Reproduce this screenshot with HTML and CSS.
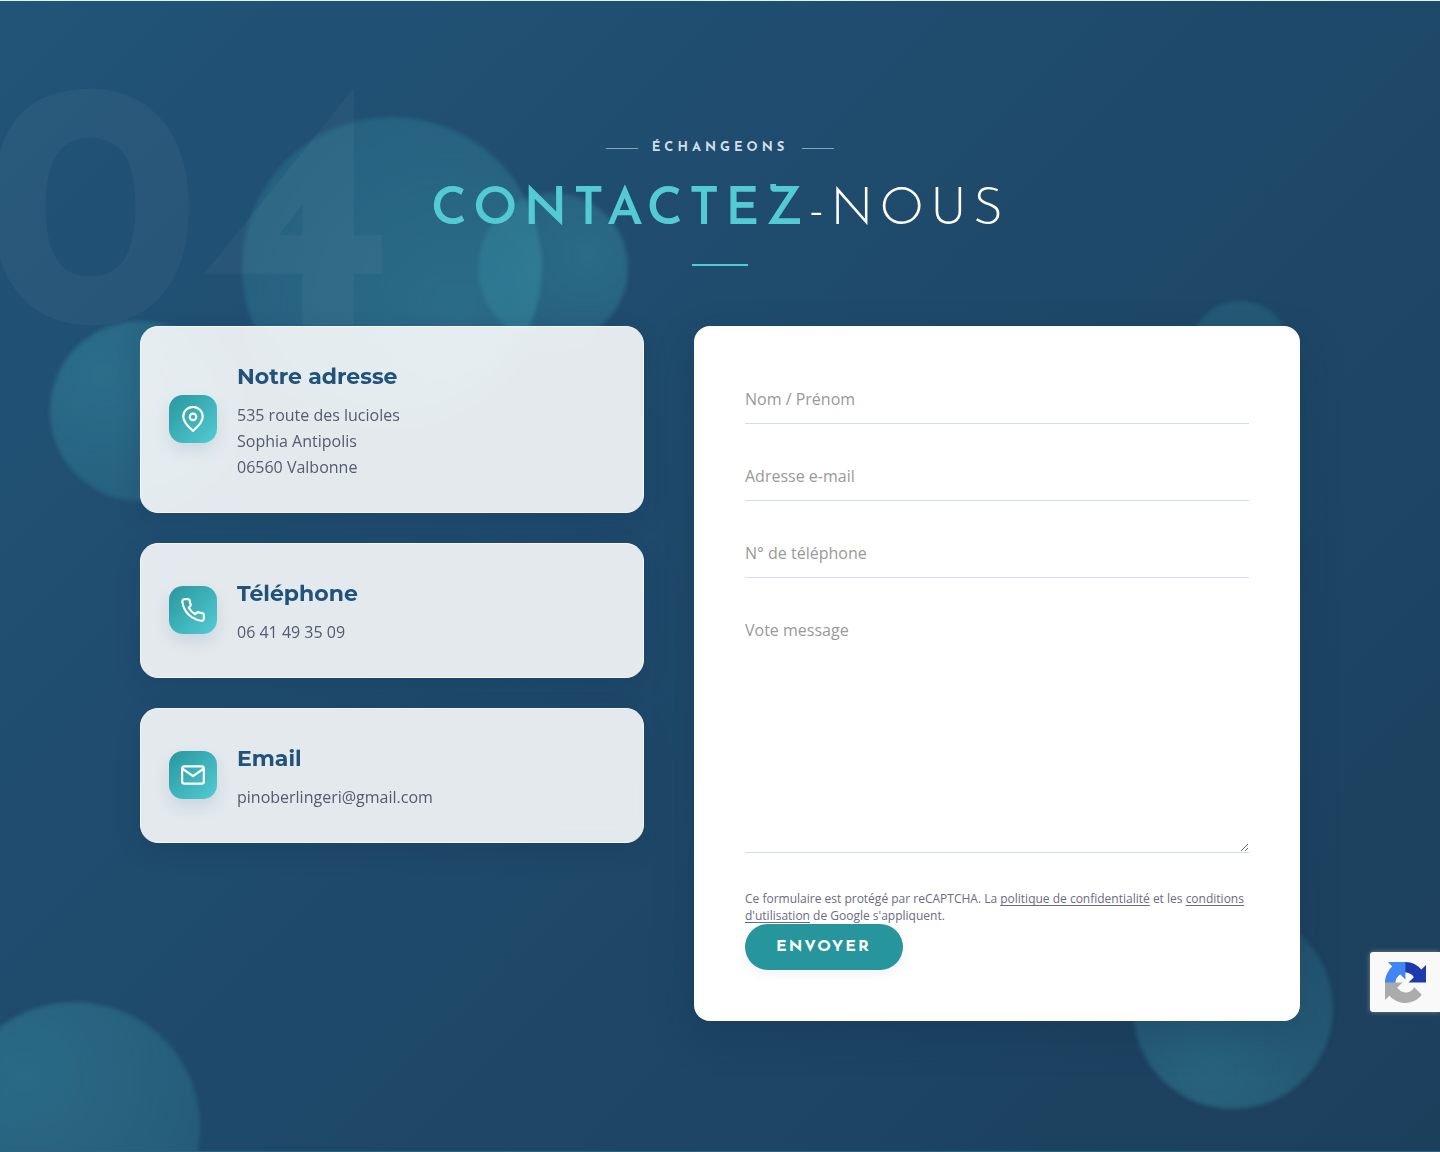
FILE: index.html
```html
<!DOCTYPE html>
<html lang="fr">
<head>
  <meta charset="UTF-8">
  <meta name="viewport" content="width=device-width, initial-scale=1.0">
  <title>Contactez-nous</title>
  <link rel="stylesheet" href="styles.css">
</head>
<body>
  <section class="contact" id="contact">
    <!-- décor -->
    <div class="bubbles" aria-hidden="true">
      <span class="bubble bubble-1"></span>
      <span class="bubble bubble-2"></span>
      <span class="bubble bubble-3"></span>
      <span class="bubble bubble-4"></span>
      <span class="bubble bubble-5"></span>
      <span class="bubble bubble-6"></span>
    </div>
    <div class="section-number" aria-hidden="true">04</div>

    <div class="container">
      <header class="section-header">
        <p class="eyebrow">Échangeons</p>
        <h2 class="section-title"><strong>Contactez</strong>-nous</h2>
      </header>

      <div class="contact-grid">
        <div class="info-list">
          <article class="info-card">
            <div class="info-icon">
              <svg viewBox="0 0 24 24"><path d="M12 23c-4.700-4-9-8.300-9-13.200a9 9 0 0 1 18 0c0 4.900-4.300 9.200-9 13.200z"/><circle cx="12" cy="10" r="3"/></svg>
            </div>
            <div>
              <h3>Notre adresse</h3>
              <p>535 route des lucioles<br>Sophia Antipolis<br>06560 Valbonne</p>
            </div>
          </article>

          <article class="info-card">
            <div class="info-icon">
              <svg viewBox="0 0 24 24"><path d="M22 16.920v3a2 2 0 0 1-2.180 2 19.790 19.790 0 0 1-8.630-3.070 19.500 19.500 0 0 1-6-6 19.790 19.790 0 0 1-3.070-8.670A2 2 0 0 1 4.110 2h3a2 2 0 0 1 2 1.720 12.840 12.840 0 0 0 .7 2.810 2 2 0 0 1-.45 2.110L8.090 9.910a16 16 0 0 0 6 6l1.270-1.270a2 2 0 0 1 2.110-.45 12.840 12.840 0 0 0 2.810.7A2 2 0 0 1 22 16.920z"/></svg>
            </div>
            <div>
              <h3>Téléphone</h3>
              <p>06 41 49 35 09</p>
            </div>
          </article>

          <article class="info-card">
            <div class="info-icon">
              <svg viewBox="0 0 24 24"><rect x="2" y="4" width="20" height="16" rx="2"/><path d="M2 6l10 7 10-7"/></svg>
            </div>
            <div>
              <h3>Email</h3>
              <p>pinoberlingeri@gmail.com</p>
            </div>
          </article>
        </div>

        <form class="contact-form">
          <input type="text" name="name" aria-label="Nom / Prénom" placeholder="Nom / Prénom" required>
          <input type="email" name="email" aria-label="Adresse e-mail" placeholder="Adresse e-mail" required>
          <input type="tel" name="phone" aria-label="N° de téléphone" placeholder="N° de téléphone">
          <textarea name="message" aria-label="Vote message" placeholder="Vote message" required></textarea>

          <p class="legal">Ce formulaire est protégé par reCAPTCHA. La <a href="#">politique de confidentialité</a> et les <a href="#">conditions d'utilisation</a> de Google s'appliquent.</p>
          <button type="submit">Envoyer</button>
        </form>
      </div>
    </div>
  </section>

  <div class="recaptcha-badge">
    <svg viewBox="0 0 64 64">
      <path fill="#1c3aa9" d="M64 31.955l-.033-1.370V4.687l-7.160 7.160C50.948 4.674 42.033.093 32.050.093c-10.400 0-19.622 4.960-25.458 12.640l11.736 11.860a15.550 15.550 0 0 1 4.754-5.334c2.050-1.600 4.952-2.906 8.968-2.906.485 0 .86.057 1.135.163 4.976.393 9.288 3.140 11.828 7.124l-8.307 8.307L64 31.953"/>
      <path fill="#4285f4" d="M31.862.094l-1.370.033H4.594l7.160 7.160C4.580 13.147 0 22.060 0 32.046c0 10.400 4.960 19.622 12.640 25.458L24.500 45.768a15.560 15.560 0 0 1-5.334-4.754c-1.600-2.050-2.906-4.952-2.906-8.968 0-.485.057-.86.163-1.135.393-4.976 3.140-9.288 7.124-11.828l8.307 8.307L31.860.095"/>
      <path fill="#ababab" d="M.001 32.045l.033 1.370v25.898l7.160-7.160c5.860 7.173 14.774 11.754 24.760 11.754 10.400 0 19.622-4.960 25.458-12.640l-11.736-11.860a15.550 15.550 0 0 1-4.754 5.334c-2.050 1.600-4.952 2.906-8.968 2.906-.485 0-.86-.057-1.135-.163-4.976-.393-9.288-3.140-11.828-7.124l8.307-8.307c-10.522.04-22.400.066-27.295-.005"/>
    </svg>
  </div>
</body>
</html>
```

FILE: styles.css
```css
* {
  box-sizing: border-box;
}
body {
  margin: 0;
  font-family: "Open Sans", "Noto Sans", sans-serif;
  font-size: 16px;
  line-height: 26px;
  color: #555b6e;
}
h2, h3, p {
  margin: 0;
}

/* Section */
.contact {
  position: relative;
  overflow: hidden;
  min-height: 100vh;
  padding: 136px 20px 130px;
  border-top: 1px solid #dcf7f7;
  border-bottom: 1px solid #2a6482;
  background: linear-gradient(135deg, #215477 0%, #1f4b6d 40%, #1c3f5c 100%);
}
.container {
  position: relative;
  max-width: 1160px;
  margin: 0 auto;
}
.section-number {
  position: absolute;
  top: 60px;
  left: -20px;
  font-family: "Josefin Sans", Lato, sans-serif;
  font-size: 352px;
  line-height: 352px;
  font-weight: 700;
  color: rgba(255, 255, 255, 0.04);
}

/* Bulles */
.bubble {
  position: absolute;
  border-radius: 50%;
  background: radial-gradient(circle at 30% 30%, rgba(77, 201, 210, 0.25), rgba(77, 201, 210, 0.15) 75%);
  filter: blur(2px);
}
.bubble-1 {
  top: 116px;
  left: 242px;
  width: 300px;
  height: 300px;
  background-image: radial-gradient(circle at 72% 65%, rgba(77, 201, 210, 0.25), rgba(77, 201, 210, 0.15) 75%);
}
.bubble-2 {
  top: 192px;
  left: 478px;
  width: 150px;
  height: 150px;
  background-image: radial-gradient(circle at 73% 42%, rgba(77, 201, 210, 0.25), rgba(77, 201, 210, 0.15) 75%);
}
.bubble-3 {
  top: 320px;
  left: 50px;
  width: 180px;
  height: 180px;
}
.bubble-4 {
  bottom: -101px;
  left: -50px;
  width: 250px;
  height: 250px;
}
.bubble-5 {
  right: 107px;
  bottom: 42px;
  width: 200px;
  height: 200px;
  background-image: radial-gradient(circle at 40% 80%, rgba(77, 201, 210, 0.25), rgba(77, 201, 210, 0.15) 75%);
}
.bubble-6 {
  top: 300px;
  right: 150px;
  width: 100px;
  height: 100px;
  background: rgba(77, 201, 210, 0.14);
}

/* Titre */
.section-header {
  text-align: center;
}
.eyebrow {
  display: flex;
  justify-content: center;
  align-items: center;
  gap: 14px;
  font-family: "Josefin Sans", Lato, sans-serif;
  font-size: 13px;
  line-height: 22px;
  font-weight: 700;
  letter-spacing: 4px;
  text-transform: uppercase;
  color: #d0dfe9;
}
.eyebrow::before,
.eyebrow::after {
  content: "";
  width: 32px;
  height: 1px;
  background: #84a4b6;
}
.section-title {
  margin-top: 20px;
  font-family: "Josefin Sans", Lato, sans-serif;
  font-size: 52px;
  line-height: 64px;
  font-weight: 300;
  letter-spacing: 6px;
  text-transform: uppercase;
  color: #fff;
}
.section-title strong {
  font-weight: 600;
  color: #54cbd4;
}
.section-title::after {
  content: "";
  display: block;
  width: 56px;
  height: 2px;
  margin: 21px auto 0;
  background: #54cbd4;
}

/* Cartes */
.contact-grid {
  display: grid;
  grid-template-columns: 504fr 606fr;
  align-items: start;
  gap: 50px;
  margin-top: 60px;
}
.info-list {
  display: grid;
  gap: 30px;
}
.info-card {
  display: flex;
  align-items: center;
  gap: 20px;
  padding: 30px 28px 32px;
  border: 1px solid #f4f7f9;
  border-radius: 18px;
  background: rgba(255, 255, 255, 0.88);
  backdrop-filter: blur(10px);
  box-shadow: 0 8px 24px rgba(20, 40, 70, 0.16);
}
.info-card h3 {
  margin-bottom: 6px;
  font-family: Montserrat, "Open Sans", sans-serif;
  font-size: 22px;
  line-height: 39px;
  font-weight: 700;
  color: #21527a;
}
.info-icon {
  display: flex;
  justify-content: center;
  align-items: center;
  flex: none;
  width: 48px;
  height: 48px;
  border-radius: 14px;
  background: linear-gradient(135deg, #27979e, #54cbd4);
  box-shadow: 0 8px 16px rgba(33, 82, 122, 0.12);
}
.info-icon svg {
  width: 26px;
  height: 26px;
  fill: none;
  stroke: #fff;
  stroke-width: 2;
  stroke-linecap: round;
  stroke-linejoin: round;
}

/* Formulaire */
.contact-form {
  display: flex;
  flex-direction: column;
  align-items: flex-start;
  gap: 30px;
  padding: 51px;
  border-radius: 16px;
  background: #fff;
  box-shadow: 0 15px 40px rgba(20, 40, 70, 0.22);
}
.contact-form input,
.contact-form textarea {
  display: block;
  width: 100%;
  height: 47px;
  padding: 10px 0 12px;
  border: 0;
  border-bottom: 1px solid #d3dee5;
  border-radius: 0;
  outline: none;
  background: transparent;
  font-family: inherit;
  font-size: 16px;
  line-height: 24px;
  color: #333;
}
.contact-form textarea {
  height: 245px;
  resize: vertical;
}
.contact-form ::placeholder {
  color: #999;
  opacity: 1;
}
.legal {
  margin: 7px 0 -30px;
  font-size: 12px;
  line-height: 17px;
  color: #6b6b80;
}
.legal a {
  color: inherit;
  text-decoration: underline;
  text-decoration-skip-ink: none;
  text-underline-offset: 2px;
}
.contact-form button {
  height: 46px;
  padding: 0 32px 0 31px;
  border: 0;
  border-radius: 23px;
  background: #26969c;
  box-shadow: 0 4px 12px rgba(20, 40, 70, 0.06);
  font-family: "Josefin Sans", Lato, sans-serif;
  font-size: 16px;
  font-weight: 700;
  letter-spacing: 2px;
  text-transform: uppercase;
  color: #fff;
  cursor: pointer;
}

/* Badge reCAPTCHA */
.recaptcha-badge {
  position: fixed;
  right: 0;
  bottom: 140px;
  display: flex;
  align-items: center;
  width: 70px;
  height: 60px;
  padding-left: 15px;
  border-radius: 3px 0 0 3px;
  background: #f9f9f9;
  box-shadow: 0 0 5px gray;
}
.recaptcha-badge svg {
  width: 41px;
  height: 41px;
}
```
